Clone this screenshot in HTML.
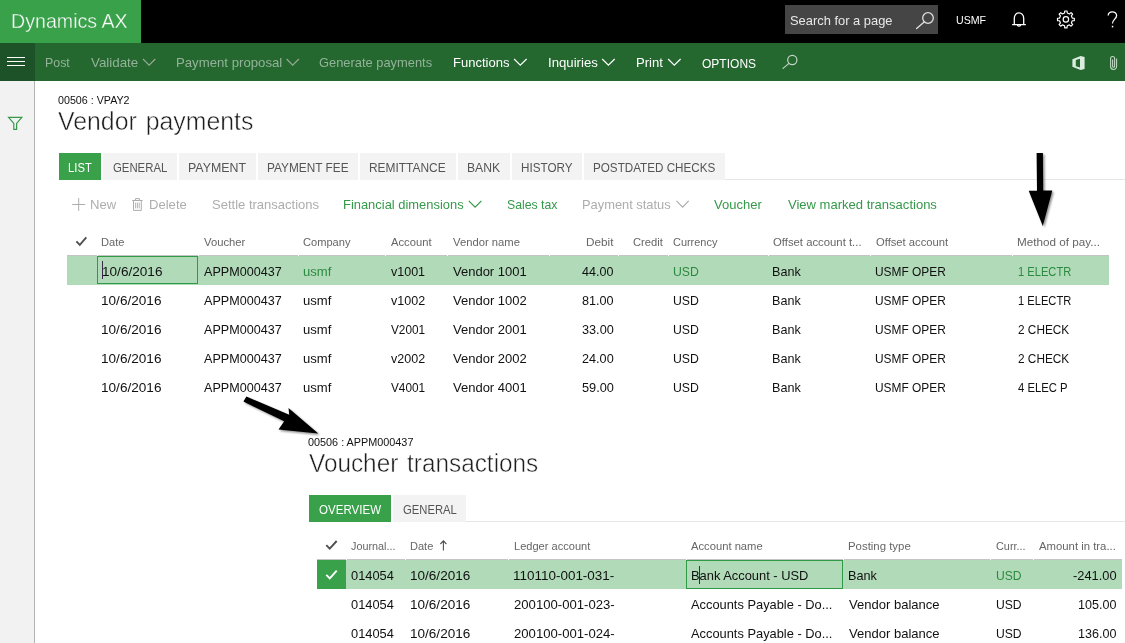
<!DOCTYPE html>
<html>
<head>
<meta charset="utf-8">
<title>Vendor payments</title>
<style>
html,body{margin:0;padding:0;background:#fff}
body{width:1125px;height:643px;position:relative;overflow:hidden;font-family:"Liberation Sans",sans-serif}
.t{position:absolute;white-space:pre;transform-origin:0 0}
.title{-webkit-text-stroke:0.5px #fff}
.logo{-webkit-text-stroke:0.35px #38a14a}
.b{position:absolute}
svg{position:absolute;overflow:visible}
.tab{position:absolute;background:#f3f3f3;height:27px}
.tabon{background:#38a14a}
</style>
</head>
<body>
<!-- top header -->
<div class="b" style="left:0;top:0;width:1125px;height:43px;background:#000"></div>
<div class="b" style="left:0;top:0;width:141px;height:43px;background:#38a14a"></div>
<div class="b" style="left:785px;top:5px;width:153px;height:29px;background:#454545"></div>
<!-- action bar -->
<div class="b" style="left:0;top:43px;width:1125px;height:38px;background:#24672f"></div>
<div class="b" style="left:0;top:43px;width:35px;height:38px;background:#1d5127"></div>
<!-- side bar -->
<div class="b" style="left:0;top:81px;width:34px;height:562px;background:#f2f2f2"></div>
<div class="b" style="left:34px;top:81px;width:1px;height:562px;background:#b4b4b4"></div>

<!-- tabs 1 -->
<div class="b" style="left:725px;top:179px;width:400px;height:1px;background:#e6e6e6"></div>
<div class="tab tabon" style="left:59px;top:153px;width:42px"></div>
<div class="tab" style="left:103px;top:153px;width:74px"></div>
<div class="tab" style="left:179px;top:153px;width:77px"></div>
<div class="tab" style="left:258px;top:153px;width:100px"></div>
<div class="tab" style="left:360px;top:153px;width:96px"></div>
<div class="tab" style="left:458px;top:153px;width:52px"></div>
<div class="tab" style="left:512px;top:153px;width:70px"></div>
<div class="tab" style="left:584px;top:153px;width:141px"></div>

<!-- grid 1 selected row -->
<div class="b" style="left:67px;top:255px;width:1042px;height:1px;background:#c4c4c4"></div>
<div class="b" style="left:97px;top:255px;width:1px;height:1px;background:#fff"></div><div class="b" style="left:198px;top:255px;width:1px;height:1px;background:#fff"></div><div class="b" style="left:298px;top:255px;width:1px;height:1px;background:#fff"></div><div class="b" style="left:385px;top:255px;width:1px;height:1px;background:#fff"></div><div class="b" style="left:447px;top:255px;width:1px;height:1px;background:#fff"></div><div class="b" style="left:549px;top:255px;width:1px;height:1px;background:#fff"></div><div class="b" style="left:618px;top:255px;width:1px;height:1px;background:#fff"></div><div class="b" style="left:668px;top:255px;width:1px;height:1px;background:#fff"></div><div class="b" style="left:768px;top:255px;width:1px;height:1px;background:#fff"></div><div class="b" style="left:870px;top:255px;width:1px;height:1px;background:#fff"></div><div class="b" style="left:1012px;top:255px;width:1px;height:1px;background:#fff"></div>
<div class="b" style="left:67px;top:256px;width:1042px;height:29px;background:#b1dab8"></div>
<div class="b" style="left:97px;top:256px;width:101px;height:28px;box-sizing:border-box;border:1px solid #2f9a46"></div>
<div class="b" style="left:102px;top:261px;width:1px;height:18px;background:#3a2a4a"></div>

<!-- tabs 2 -->
<div class="b" style="left:466px;top:521px;width:659px;height:1px;background:#e6e6e6"></div>
<div class="tab tabon" style="left:309px;top:495px;width:82px"></div>
<div class="tab" style="left:393px;top:495px;width:73px"></div>

<!-- grid 2 selected row -->
<div class="b" style="left:317px;top:559px;width:805px;height:1px;background:#c4c4c4"></div>
<div class="b" style="left:346px;top:559px;width:1px;height:1px;background:#fff"></div><div class="b" style="left:405px;top:559px;width:1px;height:1px;background:#fff"></div><div class="b" style="left:508px;top:559px;width:1px;height:1px;background:#fff"></div><div class="b" style="left:686px;top:559px;width:1px;height:1px;background:#fff"></div><div class="b" style="left:843px;top:559px;width:1px;height:1px;background:#fff"></div><div class="b" style="left:990px;top:559px;width:1px;height:1px;background:#fff"></div><div class="b" style="left:1033px;top:559px;width:1px;height:1px;background:#fff"></div>
<div class="b" style="left:317px;top:560px;width:805px;height:29px;background:#b1dab8"></div>
<div class="b" style="left:317px;top:560px;width:29px;height:29px;background:#38a14a"></div>
<div class="b" style="left:686px;top:560px;width:157px;height:29px;box-sizing:border-box;border:1px solid #2f9a46"></div>
<div class="b" style="left:699px;top:566px;width:1px;height:18px;background:#3a2a4a"></div>

<svg width="1125" height="643" style="left:0;top:0" viewBox="0 0 1125 643" fill="none">
<!-- hamburger -->
<g stroke="#ffffff" stroke-width="1" shape-rendering="crispEdges">
<path d="M7 57.5H25M7 61.5H25M7 65.5H25"/>
</g>
<!-- filter funnel -->
<path d="M8.6 117.4H21.8L16.6 123.4V129.3H13.8V123.4Z" stroke="#35994a" stroke-width="1.2" stroke-linejoin="miter"/>
<!-- header search icon -->
<g stroke="#e0e0e0" stroke-width="1.3" stroke-linecap="round">
<circle cx="928" cy="18" r="5.3"/>
<path d="M924.2 21.9L916.6 28.6"/>
</g>
<!-- bell -->
<g stroke="#ffffff" stroke-width="1.3" stroke-linejoin="round" stroke-linecap="round">
<path d="M1012.6 24.6H1025.4M1014.3 24.6V18.2A4.7 5.4 0 0 1 1023.7 18.2V24.6"/>
<path d="M1017.6 25.2A1.5 1.5 0 0 0 1020.4 25.2" />
</g>
<!-- gear -->
<g stroke="#ffffff" stroke-width="1.2" stroke-linejoin="round">
<circle cx="1065.9" cy="19.4" r="2.7"/>
<path d="M1072.25 18.03L1074.32 18.27L1074.32 20.53L1072.25 20.77L1071.36 22.93L1072.66 24.56L1071.06 26.16L1069.43 24.86L1067.27 25.75L1067.03 27.82L1064.77 27.82L1064.53 25.75L1062.37 24.86L1060.74 26.16L1059.14 24.56L1060.44 22.93L1059.55 20.77L1057.48 20.53L1057.48 18.27L1059.55 18.03L1060.44 15.87L1059.14 14.24L1060.74 12.64L1062.37 13.94L1064.53 13.05L1064.77 10.98L1067.03 10.98L1067.27 13.05L1069.43 13.94L1071.06 12.64L1072.66 14.24L1071.36 15.87Z"/>
</g>
<!-- question -->
<path d="M1108.2 15.6C1108.2 10.6 1116.6 10.6 1116.6 15.4C1116.6 19 1112.5 19.3 1112.5 23.6" stroke="#ffffff" stroke-width="1.3"/>
<rect x="1111.8" y="25.8" width="1.5" height="1.6" fill="#ffffff"/>
<!-- action bar chevrons -->
<g stroke="#94aa98" stroke-width="1.2">
<path d="M143 59L149.1 65.2L155.3 59"/>
<path d="M286.6 59L292.7 65.2L298.9 59"/>
</g>
<g stroke="#ffffff" stroke-width="1.2">
<path d="M514.1 59L520.3 65.2L526.6 59"/>
<path d="M602.2 59L608.4 65.2L614.7 59"/>
<path d="M668.1 59L674.3 65.2L680.6 59"/>
</g>
<!-- action bar search -->
<g stroke="#c3d6c6" stroke-width="1.2" stroke-linecap="round">
<circle cx="792.3" cy="60" r="4.6"/>
<path d="M789 63.4L783 68.4"/>
</g>
<!-- office -->
<path d="M1072.4 59.3L1080.6 56L1084.6 57.1V68.9L1080.6 70L1072.4 66.8ZM1075.8 60L1080 58.8V67.6L1075.8 66.3Z" fill="#dcede0" fill-rule="evenodd"/>
<!-- paperclip -->
<path d="M1116.6 58.6V66.4A3 3 0 0 1 1110.6 66.4V58.4A2 2 0 0 1 1114.6 58.4V66.2A1 1 0 0 1 1112.6 66.2V59.6" stroke="#c2dcc6" stroke-width="1.05"/>
<!-- toolbar plus -->
<path d="M72.2 204.5H85.2M78.7 198.1V210.9" stroke="#adadad" stroke-width="1"/>
<!-- trash -->
<g stroke="#adadad" stroke-width="1">
<path d="M132.2 200.5H142.6M135.4 200.3V198.6H139.4V200.3M133.5 200.5V210.4H141.3V200.5"/>
<path d="M135.6 202.6V208.4M137.4 202.6V208.4M139.2 202.6V208.4" stroke-width="0.9"/>
</g>
<!-- toolbar chevrons -->
<path d="M468.8 200.9L475.1 207.2L481.4 200.9" stroke="#35994a" stroke-width="1.2"/>
<path d="M676.5 200.9L682.6 207.2L688.7 200.9" stroke="#adadad" stroke-width="1.2"/>
<!-- grid1 header check -->
<path d="M76.4 241.4L79.8 244.9L86.3 237.4" stroke="#505050" stroke-width="1.9"/>
<!-- grid2 header check -->
<path d="M326.3 545.2L329.7 548.7L336.7 541" stroke="#505050" stroke-width="1.9"/>
<!-- grid2 selected check -->
<path d="M326.3 574.8L329.8 578.4L336.7 570.6" stroke="#ffffff" stroke-width="1.9"/>
<!-- sort arrow -->
<path d="M443.4 550.6V541M440.4 544L443.4 540.8L446.4 544" stroke="#505050" stroke-width="1.1"/>
<!-- arrows -->
<defs><filter id="sh" x="-30%" y="-30%" width="160%" height="160%"><feGaussianBlur stdDeviation="1.2"/></filter></defs>
<g filter="url(#sh)" opacity="0.45" transform="translate(1.5,1.5)">
<path d="M1036.6 153H1042.9L1043.2 190.6L1052.3 190.4L1042.8 226L1028.7 190.8L1037 190.7Z" fill="#000"/>
<path d="M246.4 396.6L289.2 414.8L288.5 408L318.3 433.5L278.5 429.4L284.2 421.2L243.4 401.6Z" fill="#000"/>
</g>
<path d="M1036.6 153H1042.9L1043.2 190.6L1052.3 190.4L1042.8 226L1028.7 190.8L1037 190.7Z" fill="#000"/>
<path d="M246.4 396.6L289.2 414.8L288.5 408L318.3 433.5L278.5 429.4L284.2 421.2L243.4 401.6Z" fill="#000"/>
</svg>


<span id="logo" class="t logo" style="left:11.21px;top:3.00px;font-size:21px;line-height:36px;transform:scaleX(0.9340);color:#ffffff;">Dynamics AX</span>
<span id="srch" class="t" style="left:789.89px;top:11.00px;font-size:13px;line-height:20px;transform:scaleX(0.9922);color:#e8e8e8;">Search for a page</span>
<span id="usmf" class="t" style="left:955.89px;top:10.00px;font-size:11px;line-height:20px;transform:scaleX(0.9658);color:#ffffff;">USMF</span>
<span id="ab1" class="t" style="left:44.64px;top:53.00px;font-size:13px;line-height:20px;transform:scaleX(0.9521);color:#93b399;">Post</span>
<span id="ab2" class="t" style="left:90.91px;top:53.00px;font-size:13px;line-height:20px;transform:scaleX(1.0264);color:#93b399;">Validate</span>
<span id="ab3" class="t" style="left:175.93px;top:53.00px;font-size:13px;line-height:20px;transform:scaleX(1.0139);color:#93b399;">Payment proposal</span>
<span id="ab4" class="t" style="left:319.46px;top:53.00px;font-size:13px;line-height:20px;transform:scaleX(0.9906);color:#93b399;">Generate payments</span>
<span id="ab5" class="t" style="left:453.47px;top:53.00px;font-size:13px;line-height:20px;transform:scaleX(1.0016);color:#ffffff;">Functions</span>
<span id="ab6" class="t" style="left:547.93px;top:53.00px;font-size:13px;line-height:20px;transform:scaleX(1.0144);color:#ffffff;">Inquiries</span>
<span id="ab7" class="t" style="left:636.38px;top:53.00px;font-size:13px;line-height:20px;transform:scaleX(1.0094);color:#ffffff;">Print</span>
<span id="ab8" class="t" style="left:701.76px;top:54.00px;font-size:13px;line-height:20px;transform:scaleX(0.9241);color:#ffffff;">OPTIONS</span>
<span id="cap1" class="t" style="left:57.95px;top:90.00px;font-size:11px;line-height:20px;transform:scaleX(0.9725);color:#111111;">00506 : VPAY2</span>
<span id="ttl1" class="t title" style="left:58.11px;top:103.00px;font-size:26px;line-height:36px;transform:scaleX(0.9554);color:#1e1e1e;word-spacing:2.2px">Vendor payments</span>
<span id="t1a" class="t" style="left:68.31px;top:158.00px;font-size:12.6px;line-height:20px;transform:scaleX(0.8940);color:#ffffff;">LIST</span>
<span id="t1b" class="t" style="left:112.72px;top:158.00px;font-size:12.6px;line-height:20px;transform:scaleX(0.9019);color:#555555;">GENERAL</span>
<span id="t1c" class="t" style="left:187.73px;top:158.00px;font-size:12.6px;line-height:20px;transform:scaleX(0.9838);color:#555555;">PAYMENT</span>
<span id="t1d" class="t" style="left:267.19px;top:158.00px;font-size:12.6px;line-height:20px;transform:scaleX(0.9395);color:#555555;">PAYMENT FEE</span>
<span id="t1e" class="t" style="left:369.28px;top:158.00px;font-size:12.6px;line-height:20px;transform:scaleX(0.9470);color:#555555;">REMITTANCE</span>
<span id="t1f" class="t" style="left:467.04px;top:158.00px;font-size:12.6px;line-height:20px;transform:scaleX(0.9662);color:#555555;">BANK</span>
<span id="t1g" class="t" style="left:521.33px;top:158.00px;font-size:12.6px;line-height:20px;transform:scaleX(0.9273);color:#555555;">HISTORY</span>
<span id="t1h" class="t" style="left:593.38px;top:158.00px;font-size:12.6px;line-height:20px;transform:scaleX(0.9265);color:#555555;">POSTDATED CHECKS</span>
<span id="tb1" class="t" style="left:89.88px;top:195.00px;font-size:13px;line-height:20px;transform:scaleX(1.0062);color:#adadad;">New</span>
<span id="tb2" class="t" style="left:148.91px;top:195.00px;font-size:13px;line-height:20px;transform:scaleX(1.0055);color:#adadad;">Delete</span>
<span id="tb3" class="t" style="left:211.78px;top:195.00px;font-size:13px;line-height:20px;transform:scaleX(1.0006);color:#adadad;">Settle transactions</span>
<span id="tb4" class="t" style="left:343.13px;top:195.00px;font-size:13px;line-height:20px;transform:scaleX(0.9934);color:#35994a;">Financial dimensions</span>
<span id="tb5" class="t" style="left:506.50px;top:195.00px;font-size:13px;line-height:20px;transform:scaleX(0.9439);color:#35994a;">Sales tax</span>
<span id="tb6" class="t" style="left:581.74px;top:195.00px;font-size:13px;line-height:20px;transform:scaleX(0.9899);color:#adadad;">Payment status</span>
<span id="tb7" class="t" style="left:714.18px;top:195.00px;font-size:13px;line-height:20px;transform:scaleX(1.0002);color:#35994a;">Voucher</span>
<span id="tb8" class="t" style="left:787.60px;top:195.00px;font-size:13px;line-height:20px;transform:scaleX(1.0019);color:#35994a;">View marked transactions</span>
<span id="h1a" class="t" style="left:100.61px;top:232.00px;font-size:11.5px;line-height:20px;transform:scaleX(0.9676);color:#666666;">Date</span>
<span id="h1b" class="t" style="left:203.50px;top:232.00px;font-size:11.5px;line-height:20px;transform:scaleX(0.9788);color:#666666;">Voucher</span>
<span id="h1c" class="t" style="left:303.08px;top:232.00px;font-size:11.5px;line-height:20px;transform:scaleX(0.9650);color:#666666;">Company</span>
<span id="h1d" class="t" style="left:390.85px;top:232.00px;font-size:11.5px;line-height:20px;transform:scaleX(0.9745);color:#666666;">Account</span>
<span id="h1e" class="t" style="left:452.66px;top:232.00px;font-size:11.5px;line-height:20px;transform:scaleX(0.9791);color:#666666;">Vendor name</span>
<span id="h1f" class="t" style="left:585.94px;top:232.00px;font-size:11.5px;line-height:20px;transform:scaleX(1.0219);color:#666666;">Debit</span>
<span id="h1g" class="t" style="left:633.06px;top:232.00px;font-size:11.5px;line-height:20px;transform:scaleX(0.9706);color:#666666;">Credit</span>
<span id="h1h" class="t" style="left:673.30px;top:232.00px;font-size:11.5px;line-height:20px;transform:scaleX(0.9511);color:#666666;">Currency</span>
<span id="h1i" class="t" style="left:772.67px;top:232.00px;font-size:11.5px;line-height:20px;transform:scaleX(0.9846);color:#666666;">Offset account t...</span>
<span id="h1j" class="t" style="left:875.55px;top:232.00px;font-size:11.5px;line-height:20px;transform:scaleX(0.9755);color:#666666;">Offset account</span>
<span id="h1k" class="t" style="left:1017.16px;top:232.00px;font-size:11.5px;line-height:20px;transform:scaleX(1.0163);color:#666666;">Method of pay...</span>
<span id="r0a" class="t" style="left:102.31px;top:262.00px;font-size:13px;line-height:20px;transform:scaleX(1.0452);color:#111111;">10/6/2016</span>
<span id="r0b" class="t" style="left:204.07px;top:262.00px;font-size:13px;line-height:20px;transform:scaleX(0.9680);color:#111111;">APPM000437</span>
<span id="r0c" class="t" style="left:302.87px;top:262.00px;font-size:13px;line-height:20px;transform:scaleX(1.0058);color:#2c8a40;">usmf</span>
<span id="r0d" class="t" style="left:390.51px;top:262.00px;font-size:13px;line-height:20px;transform:scaleX(0.9622);color:#111111;">v1001</span>
<span id="r0e" class="t" style="left:452.86px;top:262.00px;font-size:13px;line-height:20px;transform:scaleX(0.9997);color:#111111;">Vendor 1001</span>
<span id="r0f" class="t" style="left:582.39px;top:262.00px;font-size:13px;line-height:20px;transform:scaleX(0.9652);color:#111111;">44.00</span>
<span id="r0g" class="t" style="left:672.62px;top:262.00px;font-size:13px;line-height:20px;transform:scaleX(0.9431);color:#2c8a40;">USD</span>
<span id="r0h" class="t" style="left:772.36px;top:262.00px;font-size:13px;line-height:20px;transform:scaleX(0.9688);color:#111111;">Bank</span>
<span id="r0i" class="t" style="left:875.42px;top:262.00px;font-size:13px;line-height:20px;transform:scaleX(0.9166);color:#111111;">USMF OPER</span>
<span id="r0j" class="t" style="left:1018.17px;top:262.00px;font-size:13px;line-height:20px;transform:scaleX(0.8569);color:#2c8a40;">1 ELECTR</span>
<span id="r1a" class="t" style="left:101.19px;top:291.00px;font-size:13px;line-height:20px;transform:scaleX(1.0449);color:#111111;">10/6/2016</span>
<span id="r1b" class="t" style="left:204.07px;top:291.00px;font-size:13px;line-height:20px;transform:scaleX(0.9680);color:#111111;">APPM000437</span>
<span id="r1c" class="t" style="left:302.87px;top:291.00px;font-size:13px;line-height:20px;transform:scaleX(1.0058);color:#111111;">usmf</span>
<span id="r1d" class="t" style="left:390.91px;top:291.00px;font-size:13px;line-height:20px;transform:scaleX(0.9633);color:#111111;">v1002</span>
<span id="r1e" class="t" style="left:452.86px;top:291.00px;font-size:13px;line-height:20px;transform:scaleX(1.0013);color:#111111;">Vendor 1002</span>
<span id="r1f" class="t" style="left:581.55px;top:291.00px;font-size:13px;line-height:20px;transform:scaleX(0.9727);color:#111111;">81.00</span>
<span id="r1g" class="t" style="left:672.62px;top:291.00px;font-size:13px;line-height:20px;transform:scaleX(0.9431);color:#111111;">USD</span>
<span id="r1h" class="t" style="left:772.36px;top:291.00px;font-size:13px;line-height:20px;transform:scaleX(0.9688);color:#111111;">Bank</span>
<span id="r1i" class="t" style="left:875.42px;top:291.00px;font-size:13px;line-height:20px;transform:scaleX(0.9166);color:#111111;">USMF OPER</span>
<span id="r1j" class="t" style="left:1018.17px;top:291.00px;font-size:13px;line-height:20px;transform:scaleX(0.8569);color:#111111;">1 ELECTR</span>
<span id="r2a" class="t" style="left:101.19px;top:320.00px;font-size:13px;line-height:20px;transform:scaleX(1.0449);color:#111111;">10/6/2016</span>
<span id="r2b" class="t" style="left:204.07px;top:320.00px;font-size:13px;line-height:20px;transform:scaleX(0.9680);color:#111111;">APPM000437</span>
<span id="r2c" class="t" style="left:302.87px;top:320.00px;font-size:13px;line-height:20px;transform:scaleX(1.0058);color:#111111;">usmf</span>
<span id="r2d" class="t" style="left:390.53px;top:320.00px;font-size:13px;line-height:20px;transform:scaleX(0.9075);color:#111111;">V2001</span>
<span id="r2e" class="t" style="left:452.86px;top:320.00px;font-size:13px;line-height:20px;transform:scaleX(0.9997);color:#111111;">Vendor 2001</span>
<span id="r2f" class="t" style="left:581.60px;top:320.00px;font-size:13px;line-height:20px;transform:scaleX(0.9761);color:#111111;">33.00</span>
<span id="r2g" class="t" style="left:672.62px;top:320.00px;font-size:13px;line-height:20px;transform:scaleX(0.9431);color:#111111;">USD</span>
<span id="r2h" class="t" style="left:772.36px;top:320.00px;font-size:13px;line-height:20px;transform:scaleX(0.9688);color:#111111;">Bank</span>
<span id="r2i" class="t" style="left:875.42px;top:320.00px;font-size:13px;line-height:20px;transform:scaleX(0.9166);color:#111111;">USMF OPER</span>
<span id="r2j" class="t" style="left:1018.23px;top:320.00px;font-size:13px;line-height:20px;transform:scaleX(0.9091);color:#111111;">2 CHECK</span>
<span id="r3a" class="t" style="left:101.19px;top:349.00px;font-size:13px;line-height:20px;transform:scaleX(1.0449);color:#111111;">10/6/2016</span>
<span id="r3b" class="t" style="left:204.07px;top:349.00px;font-size:13px;line-height:20px;transform:scaleX(0.9680);color:#111111;">APPM000437</span>
<span id="r3c" class="t" style="left:302.87px;top:349.00px;font-size:13px;line-height:20px;transform:scaleX(1.0058);color:#111111;">usmf</span>
<span id="r3d" class="t" style="left:390.91px;top:349.00px;font-size:13px;line-height:20px;transform:scaleX(0.9633);color:#111111;">v2002</span>
<span id="r3e" class="t" style="left:452.86px;top:349.00px;font-size:13px;line-height:20px;transform:scaleX(1.0013);color:#111111;">Vendor 2002</span>
<span id="r3f" class="t" style="left:581.75px;top:349.00px;font-size:13px;line-height:20px;transform:scaleX(0.9749);color:#111111;">24.00</span>
<span id="r3g" class="t" style="left:672.62px;top:349.00px;font-size:13px;line-height:20px;transform:scaleX(0.9431);color:#111111;">USD</span>
<span id="r3h" class="t" style="left:772.36px;top:349.00px;font-size:13px;line-height:20px;transform:scaleX(0.9688);color:#111111;">Bank</span>
<span id="r3i" class="t" style="left:875.42px;top:349.00px;font-size:13px;line-height:20px;transform:scaleX(0.9166);color:#111111;">USMF OPER</span>
<span id="r3j" class="t" style="left:1018.23px;top:349.00px;font-size:13px;line-height:20px;transform:scaleX(0.9091);color:#111111;">2 CHECK</span>
<span id="r4a" class="t" style="left:101.19px;top:378.00px;font-size:13px;line-height:20px;transform:scaleX(1.0449);color:#111111;">10/6/2016</span>
<span id="r4b" class="t" style="left:204.07px;top:378.00px;font-size:13px;line-height:20px;transform:scaleX(0.9680);color:#111111;">APPM000437</span>
<span id="r4c" class="t" style="left:302.87px;top:378.00px;font-size:13px;line-height:20px;transform:scaleX(1.0058);color:#111111;">usmf</span>
<span id="r4d" class="t" style="left:390.53px;top:378.00px;font-size:13px;line-height:20px;transform:scaleX(0.9075);color:#111111;">V4001</span>
<span id="r4e" class="t" style="left:452.86px;top:378.00px;font-size:13px;line-height:20px;transform:scaleX(0.9997);color:#111111;">Vendor 4001</span>
<span id="r4f" class="t" style="left:581.92px;top:378.00px;font-size:13px;line-height:20px;transform:scaleX(0.9815);color:#111111;">59.00</span>
<span id="r4g" class="t" style="left:672.62px;top:378.00px;font-size:13px;line-height:20px;transform:scaleX(0.9431);color:#111111;">USD</span>
<span id="r4h" class="t" style="left:772.36px;top:378.00px;font-size:13px;line-height:20px;transform:scaleX(0.9688);color:#111111;">Bank</span>
<span id="r4i" class="t" style="left:875.42px;top:378.00px;font-size:13px;line-height:20px;transform:scaleX(0.9166);color:#111111;">USMF OPER</span>
<span id="r4j" class="t" style="left:1018.18px;top:378.00px;font-size:13px;line-height:20px;transform:scaleX(0.8687);color:#111111;">4 ELEC P</span>
<span id="cap2" class="t" style="left:308.03px;top:432.00px;font-size:11px;line-height:20px;transform:scaleX(0.9849);color:#111111;">00506 : APPM000437</span>
<span id="ttl2" class="t title" style="left:308.70px;top:445.00px;font-size:26px;line-height:36px;transform:scaleX(0.9357);color:#1e1e1e;word-spacing:2.2px">Voucher transactions</span>
<span id="t2a" class="t" style="left:318.90px;top:500.00px;font-size:12.6px;line-height:20px;transform:scaleX(0.9182);color:#ffffff;">OVERVIEW</span>
<span id="t2b" class="t" style="left:402.78px;top:500.00px;font-size:12.6px;line-height:20px;transform:scaleX(0.8949);color:#555555;">GENERAL</span>
<span id="h2a" class="t" style="left:351.17px;top:536.00px;font-size:11.5px;line-height:20px;transform:scaleX(0.9384);color:#666666;">Journal...</span>
<span id="h2b" class="t" style="left:409.89px;top:536.00px;font-size:11.5px;line-height:20px;transform:scaleX(0.9596);color:#666666;">Date</span>
<span id="h2c" class="t" style="left:513.55px;top:536.00px;font-size:11.5px;line-height:20px;transform:scaleX(0.9624);color:#666666;">Ledger account</span>
<span id="h2d" class="t" style="left:690.84px;top:536.00px;font-size:11.5px;line-height:20px;transform:scaleX(0.9751);color:#666666;">Account name</span>
<span id="h2e" class="t" style="left:847.69px;top:536.00px;font-size:11.5px;line-height:20px;transform:scaleX(0.9915);color:#666666;">Posting type</span>
<span id="h2f" class="t" style="left:995.93px;top:536.00px;font-size:11.5px;line-height:20px;transform:scaleX(0.9445);color:#666666;">Curr...</span>
<span id="h2g" class="t" style="left:1038.80px;top:536.00px;font-size:11.5px;line-height:20px;transform:scaleX(0.9856);color:#666666;">Amount in tra...</span>
<span id="s0a" class="t" style="left:350.78px;top:566.00px;font-size:13px;line-height:20px;transform:scaleX(0.9861);color:#111111;">014054</span>
<span id="s0b" class="t" style="left:410.41px;top:566.00px;font-size:13px;line-height:20px;transform:scaleX(1.0423);color:#111111;">10/6/2016</span>
<span id="s0c" class="t" style="left:513.04px;top:566.00px;font-size:13px;line-height:20px;transform:scaleX(1.0356);color:#111111;">110110-001-031-</span>
<span id="s0d" class="t" style="left:690.64px;top:566.00px;font-size:13px;line-height:20px;transform:scaleX(0.9909);color:#111111;">Bank Account - USD</span>
<span id="s0e" class="t" style="left:847.66px;top:566.00px;font-size:13px;line-height:20px;transform:scaleX(0.9728);color:#111111;">Bank</span>
<span id="s0f" class="t" style="left:995.72px;top:566.00px;font-size:13px;line-height:20px;transform:scaleX(0.9335);color:#2c8a40;">USD</span>
<span id="s0g" class="t" style="left:1073.16px;top:566.00px;font-size:13px;line-height:20px;transform:scaleX(0.9883);color:#111111;">-241.00</span>
<span id="s1a" class="t" style="left:350.78px;top:595.00px;font-size:13px;line-height:20px;transform:scaleX(0.9861);color:#111111;">014054</span>
<span id="s1b" class="t" style="left:410.41px;top:595.00px;font-size:13px;line-height:20px;transform:scaleX(1.0423);color:#111111;">10/6/2016</span>
<span id="s1c" class="t" style="left:513.94px;top:595.00px;font-size:13px;line-height:20px;transform:scaleX(1.0096);color:#111111;">200100-001-023-</span>
<span id="s1d" class="t" style="left:690.80px;top:595.00px;font-size:13px;line-height:20px;transform:scaleX(0.9885);color:#111111;">Accounts Payable - Do...</span>
<span id="s1e" class="t" style="left:848.60px;top:595.00px;font-size:13px;line-height:20px;transform:scaleX(1.0027);color:#111111;">Vendor balance</span>
<span id="s1f" class="t" style="left:995.72px;top:595.00px;font-size:13px;line-height:20px;transform:scaleX(0.9335);color:#111111;">USD</span>
<span id="s1g" class="t" style="left:1078.45px;top:595.00px;font-size:13px;line-height:20px;transform:scaleX(0.9670);color:#111111;">105.00</span>
<span id="s2a" class="t" style="left:350.78px;top:624.00px;font-size:13px;line-height:20px;transform:scaleX(0.9861);color:#111111;">014054</span>
<span id="s2b" class="t" style="left:410.41px;top:624.00px;font-size:13px;line-height:20px;transform:scaleX(1.0423);color:#111111;">10/6/2016</span>
<span id="s2c" class="t" style="left:513.94px;top:624.00px;font-size:13px;line-height:20px;transform:scaleX(1.0096);color:#111111;">200100-001-024-</span>
<span id="s2d" class="t" style="left:690.80px;top:624.00px;font-size:13px;line-height:20px;transform:scaleX(0.9885);color:#111111;">Accounts Payable - Do...</span>
<span id="s2e" class="t" style="left:848.60px;top:624.00px;font-size:13px;line-height:20px;transform:scaleX(1.0027);color:#111111;">Vendor balance</span>
<span id="s2f" class="t" style="left:995.72px;top:624.00px;font-size:13px;line-height:20px;transform:scaleX(0.9335);color:#111111;">USD</span>
<span id="s2g" class="t" style="left:1078.45px;top:624.00px;font-size:13px;line-height:20px;transform:scaleX(0.9670);color:#111111;">136.00</span>
</body>
</html>
